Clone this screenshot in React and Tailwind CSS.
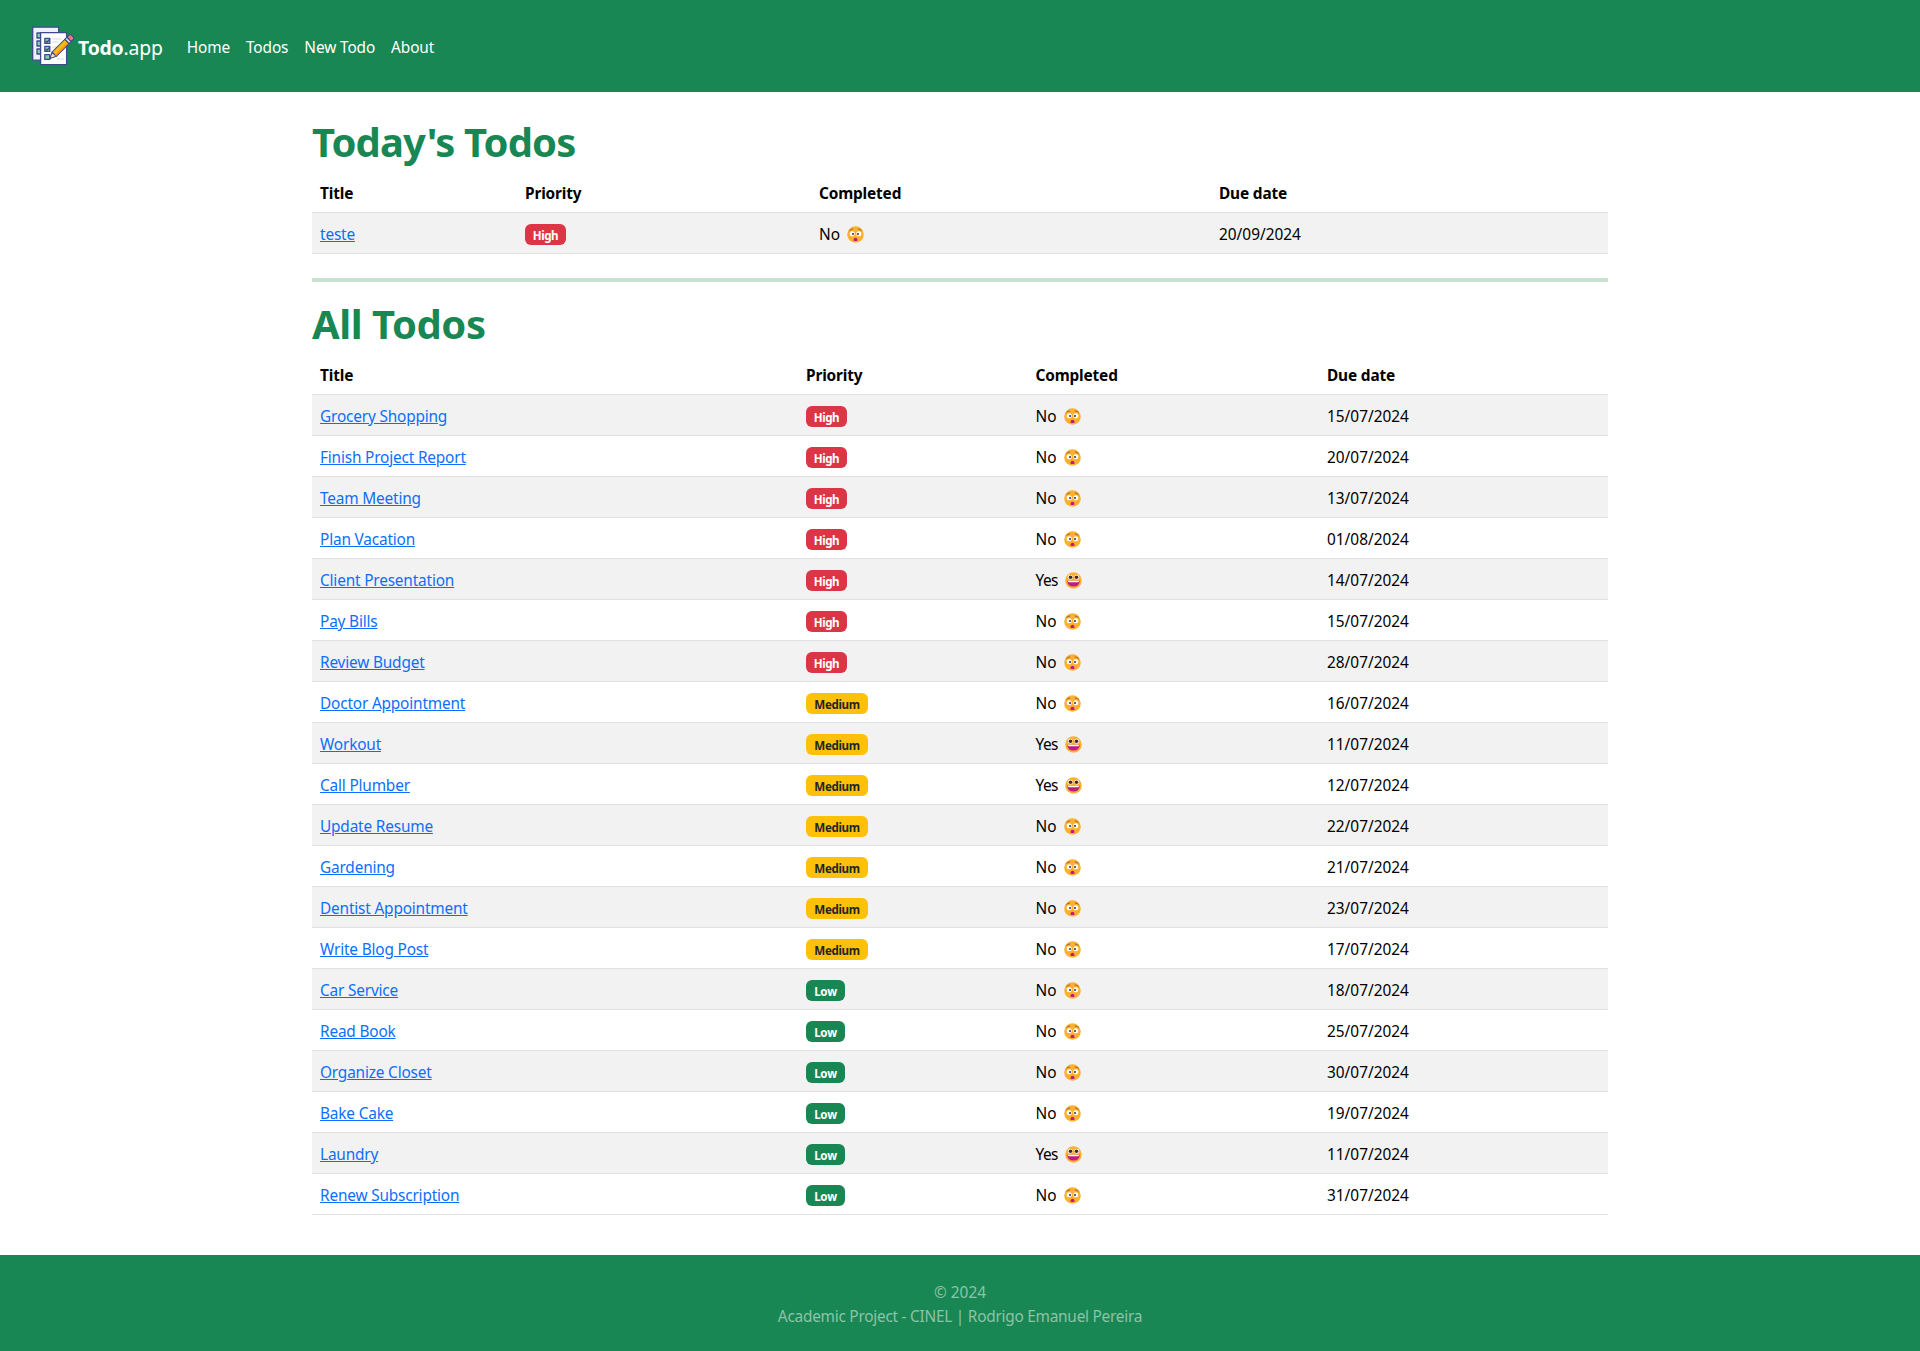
import React from "react";

const today = [["teste", "High", false, "20/09/2024"]];

const todos = [
  ["Grocery Shopping", "High", false, "15/07/2024"],
  ["Finish Project Report", "High", false, "20/07/2024"],
  ["Team Meeting", "High", false, "13/07/2024"],
  ["Plan Vacation", "High", false, "01/08/2024"],
  ["Client Presentation", "High", true, "14/07/2024"],
  ["Pay Bills", "High", false, "15/07/2024"],
  ["Review Budget", "High", false, "28/07/2024"],
  ["Doctor Appointment", "Medium", false, "16/07/2024"],
  ["Workout", "Medium", true, "11/07/2024"],
  ["Call Plumber", "Medium", true, "12/07/2024"],
  ["Update Resume", "Medium", false, "22/07/2024"],
  ["Gardening", "Medium", false, "21/07/2024"],
  ["Dentist Appointment", "Medium", false, "23/07/2024"],
  ["Write Blog Post", "Medium", false, "17/07/2024"],
  ["Car Service", "Low", false, "18/07/2024"],
  ["Read Book", "Low", false, "25/07/2024"],
  ["Organize Closet", "Low", false, "30/07/2024"],
  ["Bake Cake", "Low", false, "19/07/2024"],
  ["Laundry", "Low", true, "11/07/2024"],
  ["Renew Subscription", "Low", false, "31/07/2024"],
];

const badgeStyles = {
  High: "w-[41px] bg-[#dc3545] text-white tracking-[-0.04em]",
  Medium: "w-[62px] bg-[#ffc107] text-[#212529] tracking-[-0.03em]",
  Low: "w-[39px] bg-[#198754] text-white tracking-[-0.02em]",
};

function Badge({ level }) {
  return (
    <span className={`mt-[3px] flex h-[21px] items-center justify-center rounded-md pt-[2px] text-[11.6px] leading-none font-bold ${badgeStyles[level]}`}>
      {level}
    </span>
  );
}

function Worried() {
  return (
    <svg viewBox="0 0 17 17" className="size-[17px]">
      <circle cx="8.5" cy="8.5" r="8.3" fill="#ffb02e" />
      <path d="M2.6 4.4Q3.6 3 5.8 3M11.2 3q2.2 0 3.2 1.4" fill="none" stroke="#8a5a2b" strokeWidth=".9" strokeLinecap="round" />
      <circle cx="5.2" cy="7.8" r="2.5" fill="#fff" />
      <circle cx="11.8" cy="7.8" r="2.5" fill="#fff" />
      <circle cx="6" cy="7.9" r="1" fill="#402a32" />
      <circle cx="11" cy="7.9" r="1" fill="#402a32" />
      <path d="M6.6 13.6q0-1.8 1.9-1.8t1.9 1.8v1q0 .5-.5.5H7.1q-.5 0-.5-.5z" fill="#bb1d80" />
    </svg>
  );
}

function Grinning() {
  return (
    <svg viewBox="0 0 17 17" className="size-[17px]">
      <circle cx="8.5" cy="8.5" r="8.3" fill="#ffb02e" />
      <circle cx="5.3" cy="5.2" r="2.4" fill="#fff" />
      <circle cx="11.7" cy="5.2" r="2.4" fill="#fff" />
      <circle cx="5.5" cy="5.2" r="1.8" fill="#402a32" />
      <circle cx="11.5" cy="5.2" r="1.8" fill="#402a32" />
      <path d="M2.3 8.8h12.4q0 5.8-6.2 5.8T2.3 8.8z" fill="#bb1d80" />
      <path d="M3 8.8h11v.6q0 .8-1 .8H4q-1 0-1-.8z" fill="#fff" />
    </svg>
  );
}

function Logo() {
  return (
    <svg viewBox="0 0 44 40" className="h-10 w-11">
      <g stroke="#3f4a8a" strokeWidth="1.3" strokeLinejoin="round">
        <path d="M.7 1.2h26v33H.7z" fill="#eef2fb" />
        <path d="M5 7h5v5H5zM5 15h5v5H5zM5 23h5v5H5z" fill="#7fd694" />
        <path d="M8.6 6.6h26v32h-26z" fill="#fff" />
        <path d="M12.8 12.4h5v5h-5zM12.8 20.4h5v5h-5zM12.8 28.6h5v4.8h-5z" fill="#7fd694" />
        <path d="m13.6 15 1.4 1.3 2.8-3.2m-4.2 9.9 1.4 1.3 2.8-3.2" fill="none" />
      </g>
      <path d="M20.5 13h9M20.5 16h6M20.5 21h4M25 33h7" stroke="#cfd6ea" strokeWidth="1" />
      <g transform="translate(18 32.4) rotate(-45)" stroke="#3f4a8a" strokeWidth="1.1" strokeLinejoin="round">
        <path d="m0 0 6-3v6z" fill="#fbe3c4" />
        <path d="M6-3h18v6H6z" fill="#fdb813" />
        <path d="M6 1h18v1.5H6z" fill="#f09a10" stroke="none" />
        <path d="M24-3h3v6h-3z" fill="#d5dcf0" />
        <path d="M27-3h3q1.6 0 1.6 1.6v2.8Q31.6 3 30 3h-3z" fill="#f2777a" />
      </g>
    </svg>
  );
}

function TodoTable({ rows, columns }) {
  return (
    <div className="mt-2 text-[15.4px] leading-6 text-black">
      <div className={`grid h-[41px] border-b border-[#dee2e6] font-bold tracking-[-0.01em] ${columns}`}>
        {["Title", "Priority", "Completed", "Due date"].map((h) => (
          <div key={h} className="px-2 pt-2.5">{h}</div>
        ))}
      </div>
      {rows.map(([title, level, done, due]) => (
        <div key={title} className={`grid h-[41px] border-b border-[#dee2e6] odd:bg-white even:bg-[#f2f2f2] ${columns}`}>
          <div className="px-2 pt-2.5">
            <a className="tracking-[-0.18px] text-[#0d6efd] underline">{title}</a>
          </div>
          <div className="px-2 pt-2"><Badge level={level} /></div>
          <div className="flex items-start gap-[7px] px-2 pt-2.5">
            <span className={done ? "tracking-[-0.5px]" : ""}>{done ? "Yes" : "No"}</span>
            <span className="pt-[3px]">{done ? <Grinning /> : <Worried />}</span>
          </div>
          <div className="px-2 pt-2.5">{due}</div>
        </div>
      ))}
    </div>
  );
}

export default function App() {
  return (
    <div className="flex min-h-[1351px] flex-col bg-white font-['Noto_Sans',sans-serif] text-[15.4px] leading-6">
      <header className="flex h-[92px] items-center bg-[#198754] pl-8 text-white">
        <a className="flex items-center gap-[2px]">
          <Logo />
          <span className="pt-[3px] text-[19.4px] leading-[30px] tracking-[-0.2px]"><b>Todo</b>.app</span>
        </a>
        <nav className="ml-6 flex gap-4 pt-1 tracking-[-0.12px]">
          <a>Home</a>
          <a>Todos</a>
          <a>New Todo</a>
          <a>About</a>
        </nav>
      </header>
      <main className="mx-auto w-[1296px] grow pt-6">
        <h1 className="h-12 pt-[2px] text-[40px] leading-[48px] font-bold tracking-[-0.85px] text-[#198754]">Today&apos;s Todos</h1>
        <TodoTable rows={today} columns="grid-cols-[205px_294px_400px_1fr]" />
        <hr className="mt-6 mb-4 h-1 border-0 bg-[#c6e1d4]" />
        <h1 className="h-12 pt-[2px] text-[40px] leading-[48px] font-bold tracking-[-0.45px] text-[#198754]">All Todos</h1>
        <TodoTable rows={todos} columns="grid-cols-[486px_229.5px_291.5px_1fr]" />
      </main>
      <footer className="h-24 bg-[#198754] pt-[26px] text-center tracking-[-0.25px] text-[#8cc3a9]">
        <p className="tracking-normal">© 2024</p>
        <p>Academic Project - CINEL | Rodrigo Emanuel Pereira</p>
      </footer>
    </div>
  );
}
